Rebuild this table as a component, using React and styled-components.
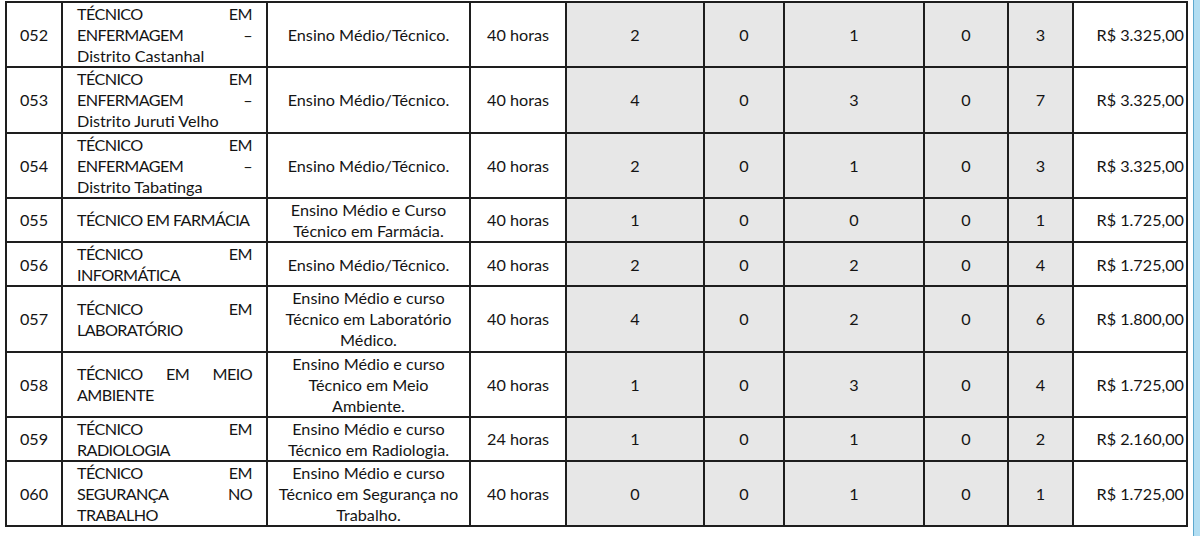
import React from 'react';
import styled, { createGlobalStyle } from 'styled-components';

const GlobalStyle = createGlobalStyle`
  html, body {
    margin: 0;
    padding: 0;
    background: #ffffff;
  }
  body {
    font-family: Lato, 'Open Sans', 'Liberation Sans', sans-serif;
    color: #141414;
  }
`;

const Page = styled.div`
  display: flex;
  width: 1200px;
  height: 536px;
  overflow: hidden;
`;

const Sheet = styled.div`
  flex: 1;
  padding: 1px 0 0 5px;
`;

const WindowEdge = styled.div`
  width: 6px;
  border-left: 1px solid #5ea9cf;
  background: #b3def2;
`;

const Table = styled.table`
  width: 1183px;
  table-layout: fixed;
  border-collapse: collapse;
  font-size: 16.2px;
  line-height: 21.1px;
`;

const Cell = styled.td`
  border: 2px solid #1e1e1e;
  padding: 0 ${(p) => p.$pad || 0}px;
  vertical-align: middle;
  text-align: ${(p) => p.$align || 'center'};
  background: ${(p) => (p.$shaded ? '#e7e7e7' : '#ffffff')};
  white-space: nowrap;
`;

// the job titles are set in capitals, narrower in the original font
const NameLine = styled.div`
  text-align: ${(p) => (p.$justify ? 'justify' : 'left')};
  text-align-last: ${(p) => (p.$justify ? 'justify' : 'left')};
  letter-spacing: ${(p) => (p.$caps ? '-0.6px' : '0')};
`;

const widths = [56, 205, 203, 96, 138, 80, 140, 84, 65, 114];

const rows = [
  {
    code: '052',
    name: ['TÉCNICO EM', 'ENFERMAGEM –', 'Distrito Castanhal'],
    edu: ['Ensino Médio/Técnico.'],
    hours: '40 horas',
    counts: [2, 0, 1, 0, 3],
    pay: 'R$ 3.325,00',
  },
  {
    code: '053',
    name: ['TÉCNICO EM', 'ENFERMAGEM –', 'Distrito Juruti Velho'],
    edu: ['Ensino Médio/Técnico.'],
    hours: '40 horas',
    counts: [4, 0, 3, 0, 7],
    pay: 'R$ 3.325,00',
  },
  {
    code: '054',
    name: ['TÉCNICO EM', 'ENFERMAGEM –', 'Distrito Tabatinga'],
    edu: ['Ensino Médio/Técnico.'],
    hours: '40 horas',
    counts: [2, 0, 1, 0, 3],
    pay: 'R$ 3.325,00',
  },
  {
    code: '055',
    name: ['TÉCNICO EM FARMÁCIA'],
    edu: ['Ensino Médio e Curso', 'Técnico em Farmácia.'],
    hours: '40 horas',
    counts: [1, 0, 0, 0, 1],
    pay: 'R$ 1.725,00',
  },
  {
    code: '056',
    name: ['TÉCNICO EM', 'INFORMÁTICA'],
    edu: ['Ensino Médio/Técnico.'],
    hours: '40 horas',
    counts: [2, 0, 2, 0, 4],
    pay: 'R$ 1.725,00',
  },
  {
    code: '057',
    name: ['TÉCNICO EM', 'LABORATÓRIO'],
    edu: ['Ensino Médio e curso', 'Técnico em Laboratório', 'Médico.'],
    hours: '40 horas',
    counts: [4, 0, 2, 0, 6],
    pay: 'R$ 1.800,00',
  },
  {
    code: '058',
    name: ['TÉCNICO EM MEIO', 'AMBIENTE'],
    edu: ['Ensino Médio e curso', 'Técnico em Meio', 'Ambiente.'],
    hours: '40 horas',
    counts: [1, 0, 3, 0, 4],
    pay: 'R$ 1.725,00',
  },
  {
    code: '059',
    name: ['TÉCNICO EM', 'RADIOLOGIA'],
    edu: ['Ensino Médio e curso', 'Técnico em Radiologia.'],
    hours: '24 horas',
    counts: [1, 0, 1, 0, 2],
    pay: 'R$ 2.160,00',
  },
  {
    code: '060',
    name: ['TÉCNICO EM', 'SEGURANÇA NO', 'TRABALHO'],
    edu: ['Ensino Médio e curso', 'Técnico em Segurança no', 'Trabalho.'],
    hours: '40 horas',
    counts: [0, 0, 1, 0, 1],
    pay: 'R$ 1.725,00',
  },
];

const JobRow = ({ row }) => (
  <tr>
    <Cell>{row.code}</Cell>
    <Cell $align='left' $pad={14}>
      {row.name.map((line, i) => (
        <NameLine
          key={i}
          $justify={i < row.name.length - 1}
          $caps={line === line.toUpperCase()}
        >
          {line}
        </NameLine>
      ))}
    </Cell>
    <Cell>
      {row.edu.map((line, i) => (
        <div key={i}>{line}</div>
      ))}
    </Cell>
    <Cell>{row.hours}</Cell>
    {row.counts.map((n, i) => (
      <Cell key={i} $shaded>
        {n}
      </Cell>
    ))}
    <Cell $align='right' $pad={2}>
      {row.pay}
    </Cell>
  </tr>
);

const App = () => {
  return (
    <Page>
      <GlobalStyle />
      <Sheet>
        <Table>
          <colgroup>
            {widths.map((w, i) => (
              <col key={i} style={{ width: w }} />
            ))}
          </colgroup>
          <tbody>
            {rows.map((row) => (
              <JobRow key={row.code} row={row} />
            ))}
          </tbody>
        </Table>
      </Sheet>
      <WindowEdge />
    </Page>
  );
};

export default App;
